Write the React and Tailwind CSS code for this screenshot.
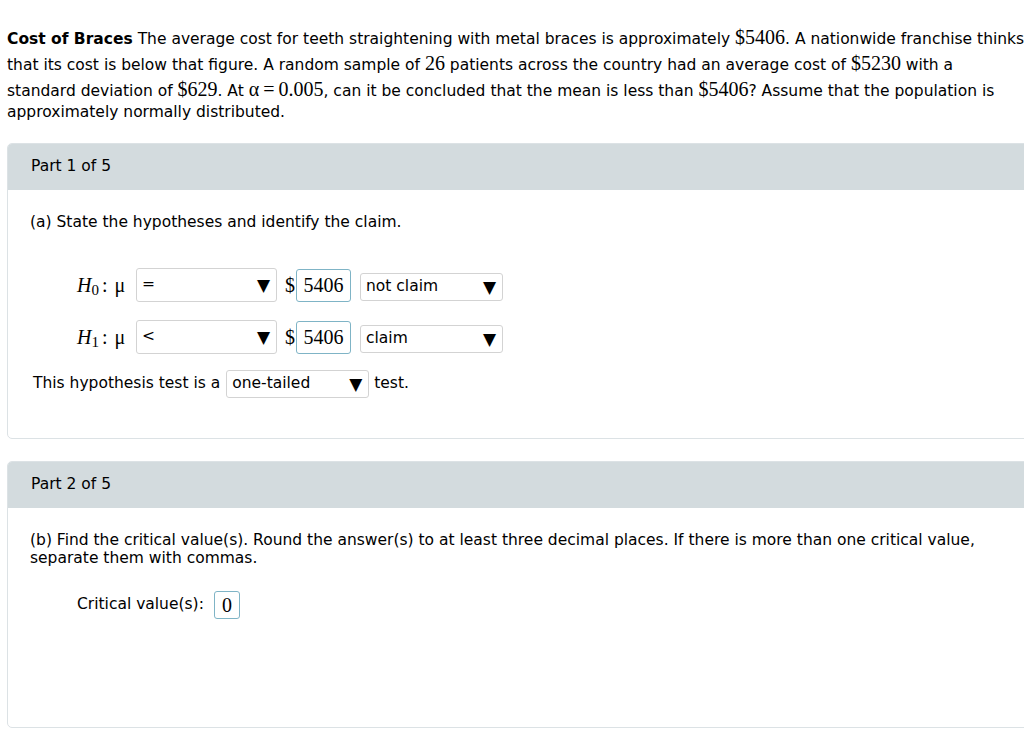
import React from 'react';

const sans = { fontFamily: '"DejaVu Sans", Verdana, sans-serif' };

const M = ({ children }) => (
  <span className="font-['Liberation_Serif',serif] text-[20px]">{children}</span>
);

const Select = ({ value, w, h }) => (
  <div
    className={`flex items-center justify-between border border-[#d3d3d3] rounded-[3px] bg-white pl-[5px] pr-[6px] text-[15.5px] text-black ${w} ${h}`}
  >
    <span>{value}</span>
    <span className="text-[17px] leading-none">▼</span>
  </div>
);

const NumBox = ({ value, w }) => (
  <div
    className={`flex items-center justify-center border border-[#7fb4c6] rounded-[3px] bg-white font-['Liberation_Serif',serif] text-[20px] text-black ${w}`}
  >
    {value}
  </div>
);

const Hyp = ({ sub, op, claim, top }) => (
  <div className={`flex items-center ${top}`}>
    <div className="w-[59px] flex items-center font-['Liberation_Serif',serif] text-[20px] text-black">
      <span className="italic">H</span>
      <span className="text-[15px] relative top-[5px]">{sub}</span>
      <span className="ml-[3px]">:</span>
      <span className="ml-[7px]">μ</span>
    </div>
    <Select value={op} w="w-[141px]" h="h-[34px]" />
    <span className="ml-[8px] mr-[1px] font-['Liberation_Serif',serif] text-[20px]">$</span>
    <NumBox value="5406" w="w-[55px] h-[33px]" />
    <div className="ml-[9px] mt-[4px]">
      <Select value={claim} w="w-[143px]" h="h-[28px]" />
    </div>
  </div>
);

const PartHeader = ({ n }) => (
  <div className="h-[46px] bg-[#d3dbde] flex items-center pl-[23px] text-[15.5px] text-black">
    Part {n} of 5
  </div>
);

export default function App() {
  return (
    <div className="w-full min-h-[729px] bg-white overflow-hidden text-black" style={sans}>
      <div className="pt-[24px] pl-[7px] text-[15.5px]">
        <div className="h-[26px] leading-[26px] whitespace-nowrap">
          <b>Cost of Braces</b> The average cost for teeth straightening with metal braces is approximately <M>$5406</M>. A nationwide franchise thinks
        </div>
        <div className="h-[26px] leading-[26px] whitespace-nowrap">
          that its cost is below that figure. A random sample of <M>26</M> patients across the country had an average cost of <M>$5230</M> with a
        </div>
        <div className="h-[26px] leading-[26px] whitespace-nowrap">
          standard deviation of <M>$629</M>. At <M>α{'\u2009'}={'\u2009'}0.005</M>, can it be concluded that the mean is less than <M>$5406</M>? Assume that the population is
        </div>
        <div className="h-[20px] leading-[20px] whitespace-nowrap">approximately normally distributed.</div>
      </div>

      <div className="mt-[21px] ml-[7px] w-[1030px] h-[296px] border border-[#dce2e5] rounded-[5px] overflow-hidden">
        <PartHeader n={1} />
        <div className="pt-[23px] pl-[22px] text-[15.5px]">
          <div className="leading-[18px]">(a) State the hypotheses and identify the claim.</div>
          <div className="pl-[47px]">
            <Hyp sub="0" op="=" claim="not claim" top="mt-[37px]" />
            <Hyp sub="1" op="<" claim="claim" top="mt-[18px]" />
          </div>
          <div className="flex items-center mt-[16px] pl-[3px]">
            <span>This hypothesis test is a</span>
            <div className="ml-[6px]">
              <Select value="one-tailed" w="w-[143px]" h="h-[28px]" />
            </div>
            <span className="ml-[5px]">test.</span>
          </div>
        </div>
      </div>

      <div className="mt-[22px] ml-[7px] w-[1030px] h-[267px] border border-[#dce2e5] rounded-[5px] overflow-hidden">
        <PartHeader n={2} />
        <div className="pt-[23px] pl-[22px] text-[15.5px]">
          <div className="leading-[18px] whitespace-nowrap">
            (b) Find the critical value(s). Round the answer(s) to at least three decimal places. If there is more than one critical value,
            <br />
            separate them with commas.
          </div>
          <div className="flex items-center mt-[24px] pl-[47px]">
            <span>Critical value(s):</span>
            <div className="ml-[10px]">
              <NumBox value="0" w="w-[26px] h-[28px]" />
            </div>
          </div>
        </div>
      </div>
    </div>
  );
}
